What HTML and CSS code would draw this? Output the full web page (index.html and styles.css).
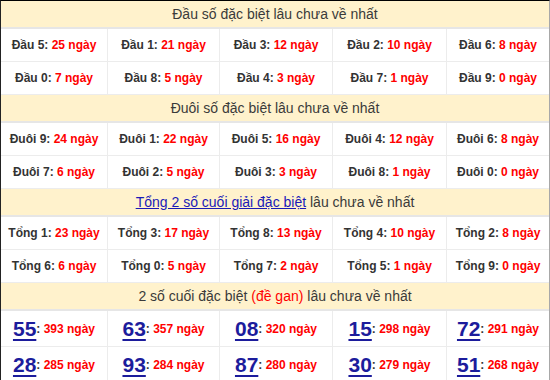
FILE: index.html
```html
<!DOCTYPE html>
<html lang="vi">
<head>
<meta charset="utf-8">
<link rel="stylesheet" href="styles.css">
</head>
<body>
<div class="board">
  <div class="head">Đầu số đặc biệt lâu chưa về nhất</div>
  <div class="row">
    <div class="cell">Đầu 5: <span class="v">25 ngày</span></div>
    <div class="cell">Đầu 1: <span class="v">21 ngày</span></div>
    <div class="cell">Đầu 3: <span class="v">12 ngày</span></div>
    <div class="cell">Đầu 2: <span class="v">10 ngày</span></div>
    <div class="cell">Đầu 6: <span class="v">8 ngày</span></div>
  </div>
  <div class="row">
    <div class="cell">Đầu 0: <span class="v">7 ngày</span></div>
    <div class="cell">Đầu 8: <span class="v">5 ngày</span></div>
    <div class="cell">Đầu 4: <span class="v">3 ngày</span></div>
    <div class="cell">Đầu 7: <span class="v">1 ngày</span></div>
    <div class="cell">Đầu 9: <span class="v">0 ngày</span></div>
  </div>

  <div class="head">Đuôi số đặc biệt lâu chưa về nhất</div>
  <div class="row">
    <div class="cell">Đuôi 9: <span class="v">24 ngày</span></div>
    <div class="cell">Đuôi 1: <span class="v">22 ngày</span></div>
    <div class="cell">Đuôi 5: <span class="v">16 ngày</span></div>
    <div class="cell">Đuôi 4: <span class="v">12 ngày</span></div>
    <div class="cell">Đuôi 6: <span class="v">8 ngày</span></div>
  </div>
  <div class="row">
    <div class="cell">Đuôi 7: <span class="v">6 ngày</span></div>
    <div class="cell">Đuôi 2: <span class="v">5 ngày</span></div>
    <div class="cell">Đuôi 3: <span class="v">3 ngày</span></div>
    <div class="cell">Đuôi 8: <span class="v">1 ngày</span></div>
    <div class="cell">Đuôi 0: <span class="v">0 ngày</span></div>
  </div>

  <div class="head"><a class="link" href="#">Tổng 2 số cuối giải đặc biệt</a> lâu chưa về nhất</div>
  <div class="row">
    <div class="cell">Tổng 1: <span class="v">23 ngày</span></div>
    <div class="cell">Tổng 3: <span class="v">17 ngày</span></div>
    <div class="cell">Tổng 8: <span class="v">13 ngày</span></div>
    <div class="cell">Tổng 4: <span class="v">10 ngày</span></div>
    <div class="cell">Tổng 2: <span class="v">8 ngày</span></div>
  </div>
  <div class="row">
    <div class="cell">Tổng 6: <span class="v">6 ngày</span></div>
    <div class="cell">Tổng 0: <span class="v">5 ngày</span></div>
    <div class="cell">Tổng 7: <span class="v">2 ngày</span></div>
    <div class="cell">Tổng 5: <span class="v">1 ngày</span></div>
    <div class="cell">Tổng 9: <span class="v">0 ngày</span></div>
  </div>

  <div class="head">2 số cuối đặc biệt <span class="red">(đề gan)</span> lâu chưa về nhất</div>
  <div class="row big">
    <div class="cell"><a class="num" href="#">55</a>: <span class="v sm">393 ngày</span></div>
    <div class="cell"><a class="num" href="#">63</a>: <span class="v sm">357 ngày</span></div>
    <div class="cell"><a class="num" href="#">08</a>: <span class="v sm">320 ngày</span></div>
    <div class="cell"><a class="num" href="#">15</a>: <span class="v sm">298 ngày</span></div>
    <div class="cell"><a class="num" href="#">72</a>: <span class="v sm">291 ngày</span></div>
  </div>
  <div class="row big">
    <div class="cell"><a class="num" href="#">28</a>: <span class="v sm">285 ngày</span></div>
    <div class="cell"><a class="num" href="#">93</a>: <span class="v sm">284 ngày</span></div>
    <div class="cell"><a class="num" href="#">87</a>: <span class="v sm">280 ngày</span></div>
    <div class="cell"><a class="num" href="#">30</a>: <span class="v sm">279 ngày</span></div>
    <div class="cell"><a class="num" href="#">51</a>: <span class="v sm">268 ngày</span></div>
  </div>
</div>
</body>
</html>
```

FILE: styles.css
```css
html, body {
  margin: 0;
  padding: 0;
  background: #fff;
}

body {
  font-family: "Liberation Sans", Arial, sans-serif;
  width: 550px;
  height: 380px;
  overflow: hidden;
}

.board {
  box-sizing: border-box;
  width: 550px;
  border-top: 1px solid #000;
  border-left: 1px solid #222;
  border-right: 1px solid #a8a8a8;
}

.head {
  height: 26px;
  line-height: 26px;
  background: #fff2cc;
  border-bottom: 2px solid #e6e6e6;
  text-align: center;
  font-size: 14px;
  color: #3a3a3a;
}

.link {
  color: #1a1ab8;
  text-decoration: underline;
}

.red {
  color: #f00;
}

.row {
  display: grid;
  grid-template-columns: 107px 112px 113px 114px 1fr;
  height: 33px;
}

.row.big {
  height: 36px;
}

.cell {
  box-sizing: border-box;
  border-right: 1px solid #ececec;
  border-bottom: 1px solid #ececec;
  display: flex;
  align-items: center;
  justify-content: center;
  white-space: pre;
  font-size: 12px;
  font-weight: bold;
  color: #333;
}

.cell:last-child {
  border-right: none;
}

.v {
  color: #f00;
}

.num {
  font-size: 21px;
  font-weight: bold;
  color: #1c1c9c;
  text-decoration: underline;
  text-decoration-thickness: 2px;
  text-underline-offset: 3px;
}

.sm {
  font-size: 12px;
}
```
